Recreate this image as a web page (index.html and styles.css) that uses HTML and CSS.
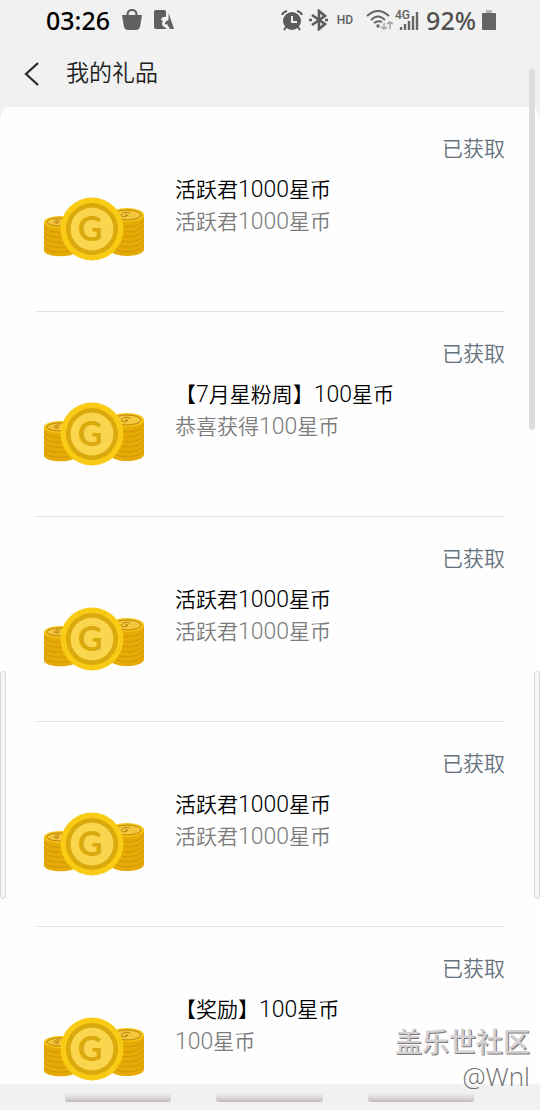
FILE: index.html
```
<!DOCTYPE html>
<html lang="zh-CN">
<head>
<meta charset="utf-8">
<meta name="viewport" content="width=device-width, initial-scale=1">
<title>我的礼品</title>
<link rel="stylesheet" href="styles.css">
</head>
<body>
<div class="screen">
  <div class="status">
    <span class="clock">03:26</span>
    <svg width="20" height="22" viewBox="0 0 20 22"><path d="M5.500 7V5.500a4.500 4.500 0 0 1 9 0V7" fill="none" stroke="#606060" stroke-width="2.200"/><path d="M0 6H20L18 18Q17 21 14 21H6Q3 21 2 18Z" fill="#606060"/></svg>
    <svg width="20" height="20" viewBox="0 0 20 20"><path d="M2 0H10Q12 0 12 2V7Q8 6 7 10L9 11Q7 14 9 16L13 19H2Q0 19 0 17V2Q0 0 2 0Z" fill="#606060"/><path d="M14.500 3L20 19H16L13 14L11 14.500Q10 12 14.500 10Z" fill="#606060"/></svg>
    <div class="indicators">
      <svg width="22" height="21" viewBox="0 0 22 21"><circle cx="11" cy="11" r="9" fill="#5c5c5c"/><path d="M1 5Q2 2 6 1M16 1Q20 2 21 5M5 17L3 20M17 17L19 20" fill="none" stroke="#5c5c5c" stroke-width="2"/><path d="M11 6V12H16" fill="none" stroke="#f1f1f1" stroke-width="2"/></svg>
      <svg width="20" height="22" viewBox="0 0 20 22"><path d="M3 6L16 15L10 20V2L16 7L3 16" fill="none" stroke="#5c5c5c" stroke-width="2.600"/><path d="M0 11H3M16 11H19" stroke="#5c5c5c" stroke-width="2.500"/></svg>
      <span class="hd">HD</span>
      <div class="network">
        <svg width="28" height="22" viewBox="0 0 28 22"><g fill="none" stroke="#666" stroke-width="2"><path d="M1 7Q12-3 23 7M5 11Q12 4 19 11M8 14Q12 11 16 13"/></g><circle cx="12" cy="17" r="1.700" fill="#666"/><path d="M18 14V20M15 18L18 20L21 18M24 20V13M21 15L24 13L27 15" fill="none" stroke="#aaa" stroke-width="1.600"/></svg>
        <svg width="25" height="22" viewBox="0 0 25 22"><text x="0" y="10" class="network-type">4G</text><path d="M6 18V21M10 15V21M14 12V21M18 7V21M22 3V21" stroke="#666" stroke-width="2.400"/></svg>
      </div>
      <span class="percent">92%</span>
      <svg width="14" height="22" viewBox="0 0 14 22"><path d="M4 1H10V4H4Z" fill="#b5b5b5"/><rect y="4" width="14" height="17" rx="1" fill="#646464"/></svg>
    </div>
  </div>
  <header class="titlebar">
    <button class="back" aria-label="返回"><svg width="16" height="24" viewBox="0 0 16 24"><path d="M14 1L2 12L14 23" fill="none" stroke="#282828" stroke-width="2.200"/></svg></button>
    <h1>我的礼品</h1>
  </header>
  <main class="sheet">
    <ul class="gifts">
      <li class="gift">
        <span class="state">已获取</span>
        <svg class="coins" viewBox="0 0 104 68" role="img" aria-label="星币">
          <g id="coins">
            <path d="M2 26V55C4 62 33 62 35 55V26Z" fill="#e6aa06"/>
            <path d="M2 31C5 38 32 38 35 31M2 36C5 43 32 43 35 36M2 41C5 48 32 48 35 41M2 46C5 53 32 53 35 46M2 51C5 58 32 58 35 51" fill="none" stroke="#cf9705"/>
            <ellipse cx="18" cy="26" rx="16" ry="6" fill="#f6c414"/>
            <ellipse cx="18" cy="26" rx="13" ry="4" fill="#f3c63c" stroke="#b8840c"/>
            <path d="M18 24Q13 23 12 26Q13 28 16 27L17 26H14" fill="none" stroke="#b8840c"/>
            <path d="M68 19V54C71 62 99 62 102 54V19Z" fill="#e6aa06"/>
            <path d="M68 24C72 33 98 33 102 24M68 29C72 38 98 38 102 29M68 34C72 43 98 43 102 34M68 39C72 48 98 48 102 39M68 44C72 53 98 53 102 44M68 49C72 58 98 58 102 49" fill="none" stroke="#cf9705"/>
            <ellipse cx="85" cy="19" rx="17" ry="7" fill="#f6c414"/>
            <ellipse cx="85" cy="19" rx="14" ry="5" fill="#f3c63c" stroke="#b8840c"/>
            <path d="M88 17Q82 15 79 19Q80 22 85 20L86 19H83" fill="none" stroke="#b8840c"/>
            <circle cx="50" cy="33" r="31.500" fill="#f9cb14"/>
            <circle cx="50" cy="33" r="26" fill="#d9a90d"/>
            <circle cx="50" cy="33" r="21.500" fill="#fad54e"/>
            <text x="48" y="45" class="coin-letter">G</text>
          </g>
        </svg>
        <div class="info"><h2>活跃君<span class="num">1000</span>星币</h2><p>活跃君<span class="num">1000</span>星币</p></div>
      </li>
      <li class="gift">
        <span class="state">已获取</span>
        <svg class="coins" viewBox="0 0 104 68" role="img" aria-label="星币"><use href="#coins"/></svg>
        <div class="info"><h2>【<span class="num">7</span>月星粉周】<span class="num">100</span>星币</h2><p>恭喜获得<span class="num">100</span>星币</p></div>
      </li>
      <li class="gift">
        <span class="state">已获取</span>
        <svg class="coins" viewBox="0 0 104 68" role="img" aria-label="星币"><use href="#coins"/></svg>
        <div class="info"><h2>活跃君<span class="num">1000</span>星币</h2><p>活跃君<span class="num">1000</span>星币</p></div>
      </li>
      <li class="gift">
        <span class="state">已获取</span>
        <svg class="coins" viewBox="0 0 104 68" role="img" aria-label="星币"><use href="#coins"/></svg>
        <div class="info"><h2>活跃君<span class="num">1000</span>星币</h2><p>活跃君<span class="num">1000</span>星币</p></div>
      </li>
      <li class="gift">
        <span class="state">已获取</span>
        <svg class="coins" viewBox="0 0 104 68" role="img" aria-label="星币"><use href="#coins"/></svg>
        <div class="info"><h2>【奖励】<span class="num">100</span>星币</h2><p><span class="num">100</span>星币</p></div>
      </li>
    </ul>
  </main>
  <nav class="gestures" aria-label="导航手势"><span></span><span></span><span></span></nav>
  <div class="scroll-thumb"></div>
  <div class="edge edge-left"></div>
  <div class="edge edge-right"></div>
  <div class="watermark"><strong>盖乐世社区</strong><span>@Wnl</span></div>
</div>
</body>
</html>
```
FILE: styles.css
```
* { box-sizing: border-box; }
body, h1, h2, p, ul { margin: 0; padding: 0; }
body {
  background: #f1f1f1;
  font-family: Roboto, "Noto Sans CJK SC", sans-serif;
  font-weight: 350;
}
.coin-letter {
  font: 700 34px Lato, sans-serif;
  fill: #d9a90d;
  text-anchor: middle;
}
.screen {
  position: relative;
  display: flex;
  flex-direction: column;
  height: 100vh;
  overflow: hidden;
}
.status {
  display: flex;
  align-items: center;
  gap: 12px;
  height: 40px;
  padding: 0 44px 0 46px;
  flex: none;
}
.clock, .percent {
  font: 500 25px/40px "Noto Sans", sans-serif;
  color: #000;
}
.indicators {
  display: flex;
  align-items: center;
  gap: 6px;
  margin-left: auto;
}
.percent { color: #505050; }
.hd {
  font: 500 12px/20px Roboto, sans-serif;
  color: #606060;
  padding: 0 7px 0 2px;
}
.network { display: flex; gap: 1px; }
.network-type { font: 500 12px Roboto, sans-serif; fill: #606060; }
.titlebar {
  display: flex;
  align-items: center;
  gap: 26px;
  height: 67px;
  padding: 0 24px;
  flex: none;
}
.back { display: flex; padding: 0; border: 0; background: none; }
.titlebar h1 {
  font-size: 23px;
  line-height: 32px;
  font-weight: 350;
  color: #202020;
}
.sheet {
  flex: 1;
  min-height: 0;
  overflow: hidden;
  background: #fefefe;
  border-radius: 8px 8px 0 0 / 16px 16px 0 0;
}
.gifts { list-style: none; padding: 0 35px 0 36px; }
.gift {
  display: grid;
  grid-template-columns: 131px 1fr;
  grid-template-rows: 32px auto;
  row-gap: 9px;
  height: 205px;
  padding: 26px 0 0 8px;
  border-bottom: 1px solid #e2e2e2;
  font-size: 21px;
  line-height: 32px;
}
.state {
  grid-column: 1 / -1;
  justify-self: end;
  color: #66727c;
}
.coins { width: 104px; height: 68px; margin: 22px 0 0 -2px; }
.gift h2 { font-size: 21px; font-weight: 350; color: #000; }
.gift p { color: #7c7c7c; }
.num { font-size: 23px; line-height: 1; }
.gestures {
  display: grid;
  grid-template-columns: repeat(3, 1fr);
  gap: 45px;
  height: 26px;
  padding: 9px 66px 8px 65px;
  background: #f1f1f1;
  flex: none;
}
.gestures span {
  border-radius: 3px;
  background: linear-gradient(#eee, #ddd9dc 50%, #bfbbbe);
}
.scroll-thumb {
  position: absolute;
  top: 69px;
  right: 5px;
  width: 6px;
  height: 361px;
  border-radius: 3px;
  background: #dcdcdc;
}
.edge {
  position: absolute;
  top: 671px;
  width: 6px;
  height: 228px;
  border: 1px solid #dadada;
  border-radius: 3px;
  background: #f6f6f6;
}
.edge-left { left: 0; }
.edge-right { right: 0; }
.watermark {
  position: absolute;
  right: 10px;
  bottom: 18px;
  display: flex;
  flex-direction: column;
  align-items: flex-end;
  color: #707070;
}
.watermark strong {
  font: 500 27px/38px "Noto Sans CJK SC", sans-serif;
  color: #d4d0d2;
  text-shadow: 1px 1px 0 #777;
}
.watermark span { font: 300 26px/32px "Open Sans", sans-serif; }
```
